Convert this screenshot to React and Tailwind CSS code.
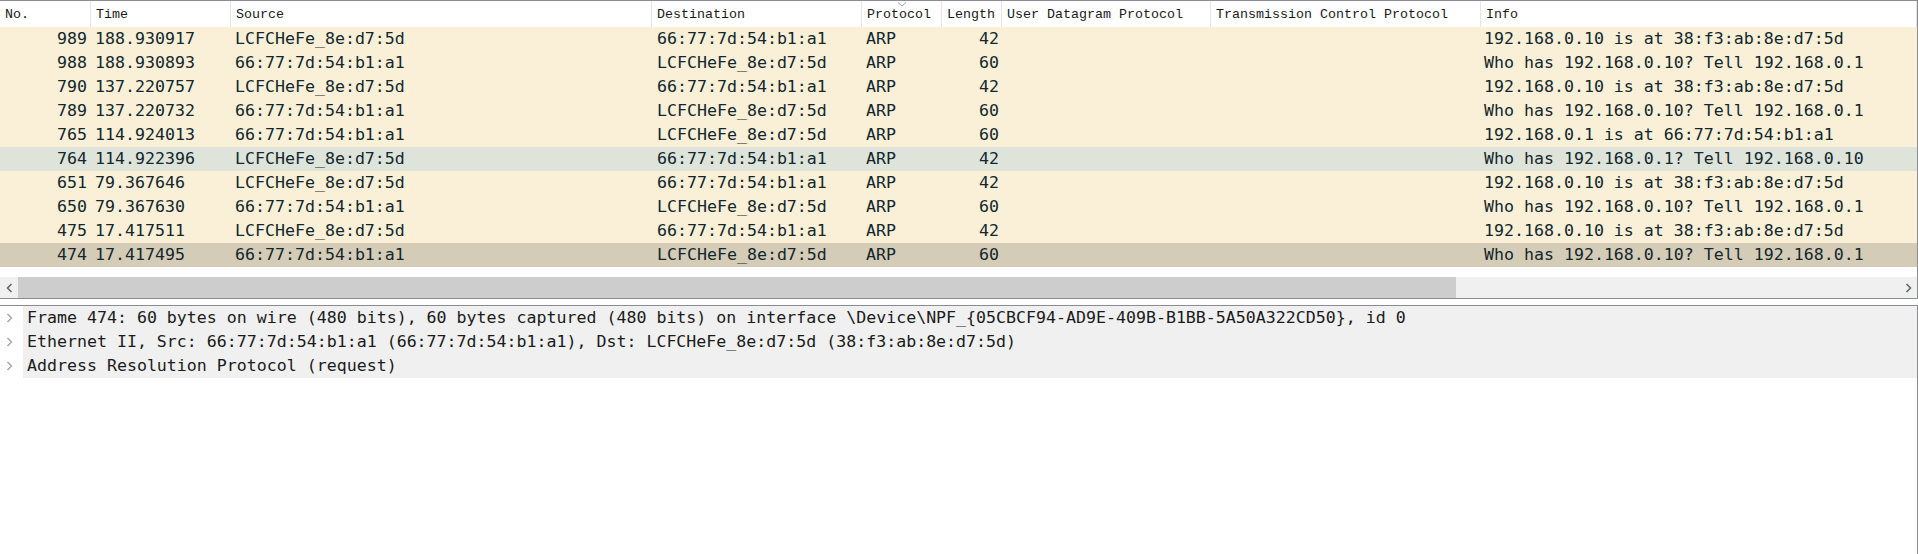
const columns = "grid grid-cols-[91px_140px_421px_210px_80px_60px_209px_270px_1fr]";

const headers = [
  { label: "No." },
  { label: "Time" },
  { label: "Source" },
  { label: "Destination" },
  { label: "Protocol", sorted: true },
  { label: "Length" },
  { label: "User Datagram Protocol" },
  { label: "Transmission Control Protocol" },
  { label: "Info" },
];

const MAC_A = "LCFCHeFe_8e:d7:5d";
const MAC_B = "66:77:7d:54:b1:a1";
const REPLY = "192.168.0.10 is at 38:f3:ab:8e:d7:5d";
const REQUEST = "Who has 192.168.0.10? Tell 192.168.0.1";

const packets = [
  { no: 989, time: "188.930917", src: MAC_A, dst: MAC_B, len: 42, info: REPLY },
  { no: 988, time: "188.930893", src: MAC_B, dst: MAC_A, len: 60, info: REQUEST },
  { no: 790, time: "137.220757", src: MAC_A, dst: MAC_B, len: 42, info: REPLY },
  { no: 789, time: "137.220732", src: MAC_B, dst: MAC_A, len: 60, info: REQUEST },
  { no: 765, time: "114.924013", src: MAC_B, dst: MAC_A, len: 60, info: "192.168.0.1 is at 66:77:7d:54:b1:a1" },
  { no: 764, time: "114.922396", src: MAC_A, dst: MAC_B, len: 42, info: "Who has 192.168.0.1? Tell 192.168.0.10", hover: true },
  { no: 651, time: "79.367646", src: MAC_A, dst: MAC_B, len: 42, info: REPLY },
  { no: 650, time: "79.367630", src: MAC_B, dst: MAC_A, len: 60, info: REQUEST },
  { no: 475, time: "17.417511", src: MAC_A, dst: MAC_B, len: 42, info: REPLY },
  { no: 474, time: "17.417495", src: MAC_B, dst: MAC_A, len: 60, info: REQUEST, selected: true },
];

const details = [
  "Frame 474: 60 bytes on wire (480 bits), 60 bytes captured (480 bits) on interface \\Device\\NPF_{05CBCF94-AD9E-409B-B1BB-5A50A322CD50}, id 0",
  "Ethernet II, Src: 66:77:7d:54:b1:a1 (66:77:7d:54:b1:a1), Dst: LCFCHeFe_8e:d7:5d (38:f3:ab:8e:d7:5d)",
  "Address Resolution Protocol (request)",
];

const mono = "font-['DejaVu_Sans_Mono','Liberation_Mono',monospace] text-[16.6px]";

function Chevron({ dir = "right", className = "" }) {
  const d = dir === "right" ? "M1.5 1 L5.5 5 L1.5 9" : "M5.5 1 L1.5 5 L5.5 9";
  return (
    <svg className={className} width="7" height="10" viewBox="0 0 7 10" fill="none">
      <path d={d} stroke="currentColor" strokeWidth="1.5" />
    </svg>
  );
}

function HeaderRow() {
  return (
    <div className={`${columns} h-[26px] bg-white font-['Liberation_Mono',monospace] text-[13.33px] text-[#1a1a1a]`}>
      {headers.map((h) => (
        <div key={h.label} className="relative flex items-center overflow-hidden whitespace-nowrap border-r border-[#e5e5e5] pl-[5px] pt-[2px]">
          {h.sorted ? (
            <svg className="absolute left-1/2 top-[1px] -translate-x-1/2" width="9" height="5" viewBox="0 0 9 5" fill="none">
              <path d="M0.5 0.5 L4.5 4 L8.5 0.5" stroke="#a0a0a0" strokeWidth="1" />
            </svg>
          ) : null}
          {h.label}
        </div>
      ))}
    </div>
  );
}

function PacketRow({ p }) {
  const bg = p.selected ? "bg-[#d5ccb7]" : p.hover ? "bg-[#dfe4da]" : "bg-[#faf0d7]";
  return (
    <div className={`${columns} h-6 items-center whitespace-nowrap text-[#12272e] ${bg}`}>
      <div className="pr-[4px] text-right">{p.no}</div>
      <div className="pl-[4px]">{p.time}</div>
      <div className="pl-[4px]">{p.src}</div>
      <div className="pl-[5px]">{p.dst}</div>
      <div className="pl-[4px]">ARP</div>
      <div className="pr-[3px] text-right">{p.len}</div>
      <div />
      <div />
      <div className="pl-[3px]">{p.info}</div>
    </div>
  );
}

export default function App() {
  return (
    <div className={`flex h-[554px] w-[1918px] flex-col overflow-hidden bg-white ${mono}`}>
      <section className="flex h-[299px] flex-col border-y border-r border-[#8a8d93]">
        <HeaderRow />
        <div className="flex flex-col">
          {packets.map((p) => (
            <PacketRow key={p.no} p={p} />
          ))}
        </div>
        <div className="h-[10px] bg-white" />
        <div className="flex h-[21px] items-center bg-[#f0f0f0] text-[#606060]">
          <div className="flex w-[18px] justify-center">
            <Chevron dir="left" />
          </div>
          <div className="h-full w-[1438px] bg-[#cdcdcd]" />
          <div className="flex-1" />
          <div className="flex w-[18px] justify-center">
            <Chevron dir="right" />
          </div>
        </div>
      </section>
      <div className="h-[6px] bg-white" />
      <section className="flex flex-1 flex-col border-t border-r border-[#8a8d93]">
        {details.map((line) => (
          <div key={line} className="flex h-6 items-center whitespace-nowrap">
            <div className="flex w-[23px] justify-center pr-[4px] text-[#a8a8a8]">
              <Chevron dir="right" />
            </div>
            <div className="flex h-full flex-1 items-center bg-[#f0f0f0] pl-[4px] text-[#1b1b1b]">{line}</div>
          </div>
        ))}
      </section>
    </div>
  );
}
